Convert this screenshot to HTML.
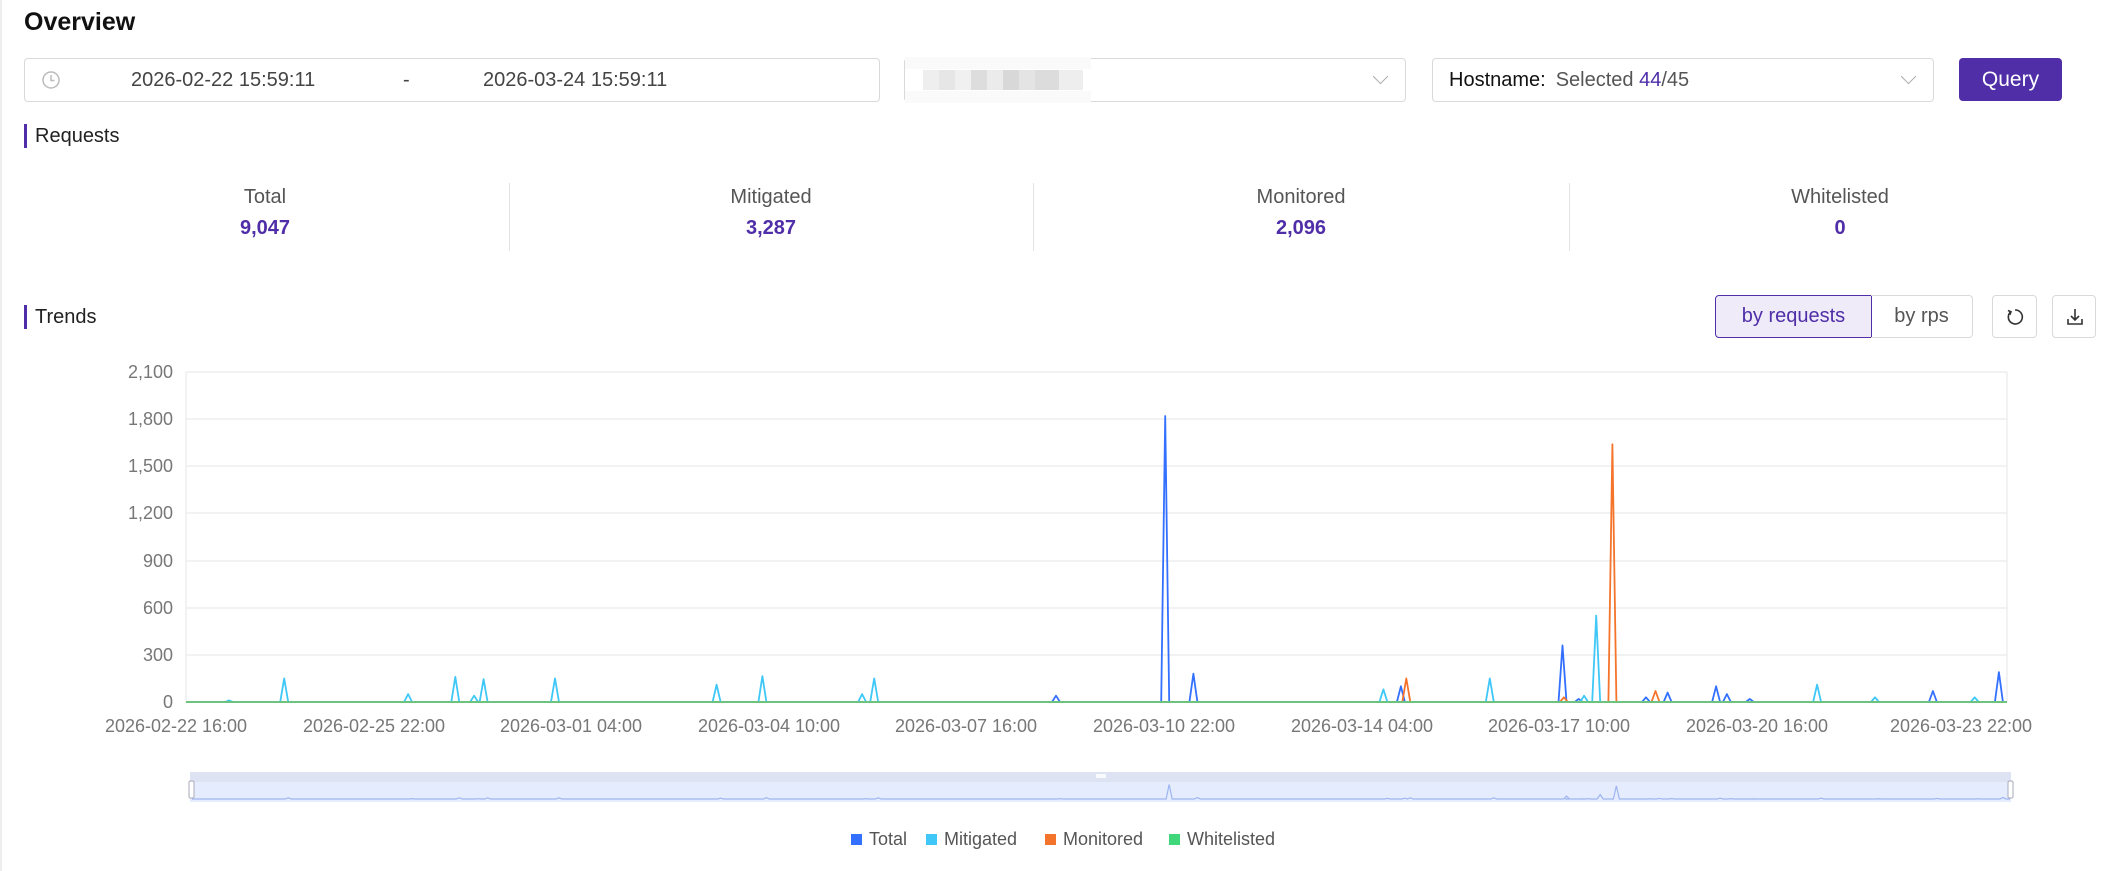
<!DOCTYPE html>
<html><head><meta charset="utf-8">
<style>
*{box-sizing:border-box;margin:0;padding:0}
body{width:2112px;height:871px;background:#fff;font-family:"Liberation Sans",sans-serif;color:#222;position:relative;overflow:hidden}
.abs{position:absolute}
.box{position:absolute;border:1.5px solid #d9d9d9;border-radius:4px;background:#fff}
.sec{position:absolute;left:24px;font-size:20px;color:#222;padding-left:8px;border-left:3px solid #4f2ea8;line-height:24px}
.stat{position:absolute;text-align:center;width:300px}
.stat .l{font-size:20px;color:#555}
.stat .v{font-size:20px;color:#4f2ea8;font-weight:bold;margin-top:8px}
.div{position:absolute;top:183px;width:1px;height:68px;background:#e3e3e3}
.chev{position:absolute;width:11px;height:11px;border-right:1.5px solid #aaa;border-bottom:1.5px solid #aaa;transform:rotate(45deg)}
</style></head><body>
<div class="abs" style="left:0;top:0;width:2px;height:871px;background:#eee"></div>
<div class="abs" style="left:24px;top:8px;font-size:25px;font-weight:bold;color:#111">Overview</div>

<div class="box" style="left:24px;top:58px;width:856px;height:44px">
  <svg class="abs" style="left:16px;top:11px" width="20" height="20" viewBox="0 0 20 20"><circle cx="10" cy="10" r="8" fill="none" stroke="#bbb" stroke-width="1.5"/><path d="M10 5v5.5h3.5" fill="none" stroke="#bbb" stroke-width="1.5"/></svg>
  <div class="abs" style="left:106px;top:10px;font-size:20px;color:#444">2026-02-22 15:59:11</div>
  <div class="abs" style="left:378px;top:10px;font-size:20px;color:#444">-</div>
  <div class="abs" style="left:458px;top:10px;font-size:20px;color:#444">2026-03-24 15:59:11</div>
</div>
<div class="box" style="left:904px;top:58px;width:502px;height:44px">
  <div class="abs" style="left:18px;top:11px;width:160px;height:20px;background:linear-gradient(90deg,#eee 0 10%,#e6e6e6 10% 20%,#f0f0f0 20% 30%,#ddd 30% 40%,#ebebeb 40% 50%,#d8d8d8 50% 60%,#e4e4e4 60% 70%,#dcdcdc 70% 85%,#eee 85%)"></div>
  <div class="abs" style="left:0;top:-2px;width:186px;height:12px;background:#fafafa"></div>
  <div class="abs" style="left:0;top:32px;width:186px;height:12px;background:#fafafa"></div>
  <div class="chev" style="left:470px;top:12px"></div>
</div>
<div class="box" style="left:1432px;top:58px;width:502px;height:44px">
  <div class="abs" style="left:16px;top:10px;font-size:20px;color:#111">Hostname:<span style="color:#555;margin-left:10px">Selected </span><span style="color:#4f2ea8">44</span><span style="color:#555">/45</span></div>
  <div class="chev" style="left:470px;top:12px"></div>
</div>
<div class="abs" style="left:1959px;top:58px;width:103px;height:43px;background:#4f2ea8;border-radius:4px;color:#fff;font-size:21px;text-align:center;line-height:43px">Query</div>

<div class="sec" style="top:124px">Requests</div>

<div class="stat" style="left:115px;top:186px"><div class="l">Total</div><div class="v">9,047</div></div>
<div class="div" style="left:509px"></div>
<div class="stat" style="left:621px;top:186px"><div class="l">Mitigated</div><div class="v">3,287</div></div>
<div class="div" style="left:1033px"></div>
<div class="stat" style="left:1151px;top:186px"><div class="l">Monitored</div><div class="v">2,096</div></div>
<div class="div" style="left:1569px"></div>
<div class="stat" style="left:1690px;top:186px"><div class="l">Whitelisted</div><div class="v">0</div></div>

<div class="sec" style="top:305px">Trends</div>

<div class="abs" style="left:1715px;top:295px;width:157px;height:43px;border:1.5px solid #4f2ea8;background:#efebf8;border-radius:4px 0 0 4px;color:#4f2ea8;font-size:20px;text-align:center;line-height:40px">by requests</div>
<div class="abs" style="left:1871px;top:295px;width:102px;height:43px;border:1.5px solid #d9d9d9;border-left:none;border-radius:0 4px 4px 0;color:#555;font-size:20px;text-align:center;line-height:40px">by rps</div>
<div class="box" style="left:1992px;top:295px;width:45px;height:43px">
  <svg class="abs" style="left:12px;top:11px" width="20" height="20" viewBox="0 0 20 20"><path d="M6 4.5A7 7 0 1 0 10 3" fill="none" stroke="#333" stroke-width="1.6"/><path d="M3 3.5l3 1.3-1.2 3" fill="none" stroke="#333" stroke-width="1.6"/></svg>
</div>
<div class="box" style="left:2052px;top:295px;width:44px;height:43px">
  <svg class="abs" style="left:12px;top:11px" width="20" height="20" viewBox="0 0 20 20"><path d="M10 2v11M6 9l4 4 4-4M3 12v5h14v-5" fill="none" stroke="#333" stroke-width="1.6"/></svg>
</div>

<svg class="abs" style="left:0;top:0" width="2112" height="871" id="ch">
  <g stroke="#eeeeee" stroke-width="1.5">
    <line x1="186" y1="372" x2="2007" y2="372"/><line x1="186" y1="419" x2="2007" y2="419"/>
    <line x1="186" y1="466" x2="2007" y2="466"/><line x1="186" y1="513" x2="2007" y2="513"/>
    <line x1="186" y1="561" x2="2007" y2="561"/><line x1="186" y1="608" x2="2007" y2="608"/>
    <line x1="186" y1="655" x2="2007" y2="655"/>
    <line x1="186" y1="372" x2="186" y2="702"/><line x1="2007" y1="372" x2="2007" y2="702"/>
  </g>
  <g font-family="Liberation Sans, sans-serif" font-size="18" fill="#777" text-anchor="end">
    <text x="173" y="378">2,100</text><text x="173" y="425">1,800</text><text x="173" y="472">1,500</text>
    <text x="173" y="519">1,200</text><text x="173" y="567">900</text><text x="173" y="614">600</text>
    <text x="173" y="661">300</text><text x="173" y="708">0</text>
  </g>
  <g font-family="Liberation Sans, sans-serif" font-size="18" fill="#777" text-anchor="middle">
    <text x="176" y="732">2026-02-22 16:00</text><text x="374" y="732">2026-02-25 22:00</text>
    <text x="571" y="732">2026-03-01 04:00</text><text x="769" y="732">2026-03-04 10:00</text>
    <text x="966" y="732">2026-03-07 16:00</text><text x="1164" y="732">2026-03-10 22:00</text>
    <text x="1362" y="732">2026-03-14 04:00</text><text x="1559" y="732">2026-03-17 10:00</text>
    <text x="1757" y="732">2026-03-20 16:00</text><text x="1961" y="732">2026-03-23 22:00</text>
  </g>
  <g id="series"></g>
  <rect x="190" y="772" width="1821" height="10" fill="#dde3f3"/>
  <rect x="190" y="782" width="1821" height="20" fill="#e5ecfd"/>
  <path id="mini" fill="none" stroke="#9fb5f0" stroke-width="1.2"/>
  <rect x="1096" y="774" width="10" height="4" fill="#fff" opacity=".8"/>
  <rect x="189" y="781" width="5" height="17" rx="1.5" fill="#fff" stroke="#aab" />
  <rect x="2008" y="781" width="5" height="17" rx="1.5" fill="#fff" stroke="#aab" />
  <g font-family="Liberation Sans, sans-serif" font-size="18" fill="#555">
    <rect x="851" y="834" width="11" height="11" fill="#3370ff"/><text x="869" y="845">Total</text>
    <rect x="926" y="834" width="11" height="11" fill="#3ec7f7"/><text x="944" y="845">Mitigated</text>
    <rect x="1045" y="834" width="11" height="11" fill="#f5742c"/><text x="1063" y="845">Monitored</text>
    <rect x="1169" y="834" width="11" height="11" fill="#40d77a"/><text x="1187" y="845">Whitelisted</text>
  </g>
</svg>
<script>
(function(){
var S=1.347,y0=702,k=330/2100;
function path(sp){sp.sort(function(a,b){return a[0]-b[0]});var d="M186 "+y0;
 sp.forEach(function(s){var x=s[0]*S;d+=" L"+(x-4).toFixed(1)+" "+y0+" L"+x.toFixed(1)+" "+(y0-s[1]*k).toFixed(1)+" L"+(x+4).toFixed(1)+" "+y0;});
 return d+" L2007 "+y0;}
var mit=[[211,150],[303,50],[338,160],[359,145],[352,40],[412,150],[532,110],[566,165],[640,50],[649,150],[1027,80],[1106,150],[1185,550],[1176,40],[1349,110],[1392,30],[1466,30],[170,10]];
var tot=[[865,1820],[886,180],[1160,360],[1040,100],[784,40],[1172,20],[1222,30],[1238,60],[1274,100],[1282,50],[1435,70],[1484,190],[1299,20]];
var mon=[[1197,1640],[1044,150],[1229,70],[1161,30]];
var g=document.getElementById("series"),ns="http://www.w3.org/2000/svg";
[[tot,"#3370ff"],[mit,"#3ec7f7"],[mon,"#f5742c"]].forEach(function(a){var p=document.createElementNS(ns,"path");p.setAttribute("d",path(a[0]));p.setAttribute("fill","none");p.setAttribute("stroke",a[1]);p.setAttribute("stroke-width","1.8");p.setAttribute("stroke-linejoin","round");g.appendChild(p);});
var l=document.createElementNS(ns,"line");l.setAttribute("x1",186);l.setAttribute("x2",2007);l.setAttribute("y1",y0);l.setAttribute("y2",y0);l.setAttribute("stroke","#6cc27e");l.setAttribute("stroke-width","2");g.appendChild(l);
var all=tot.concat(mit).concat(mon),md="M192 799";all.sort(function(a,b){return a[0]-b[0]});
all.forEach(function(s){var x=s[0]*S+4;md+=" L"+(x-3)+" 799 L"+x+" "+(799-s[1]*0.008)+" L"+(x+3)+" 799";});
document.getElementById("mini").setAttribute("d",md+" L2010 799");
})();
</script>
</body></html>
